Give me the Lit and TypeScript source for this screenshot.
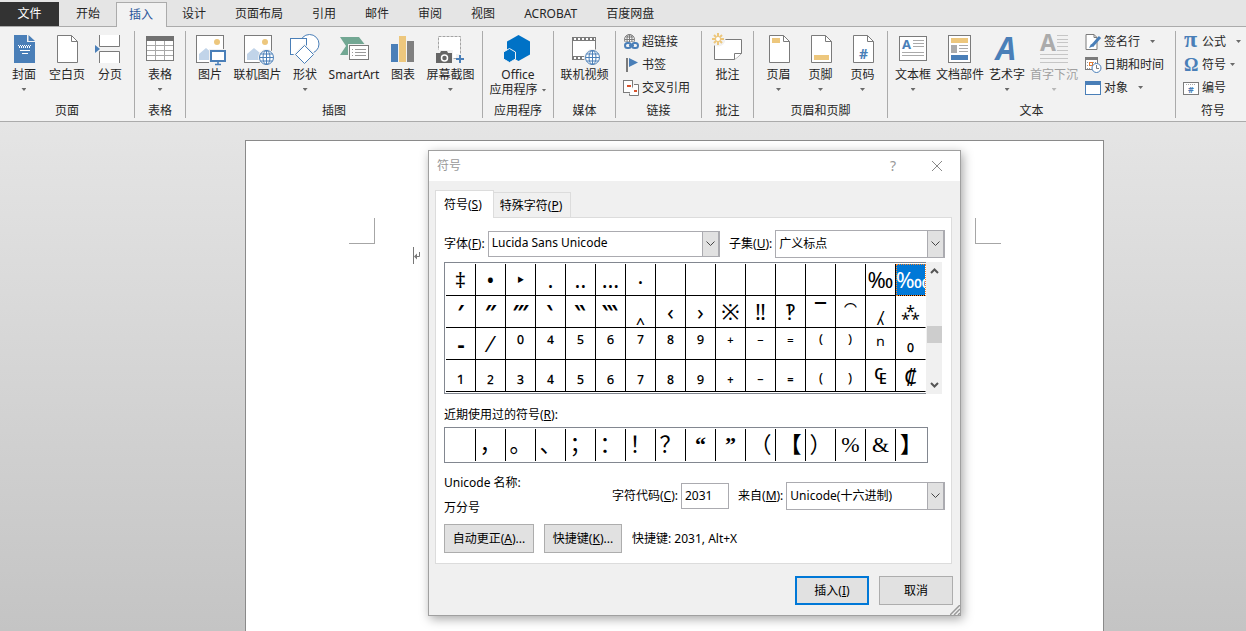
import { LitElement, html, svg, css, nothing, TemplateResult } from "lit";
import { customElement, property, state } from "lit/decorators.js";
import { classMap } from "lit/directives/class-map.js";

const BLUE = "#4a7fb8";
const GRAY = "#7b7b7b";
const GOLD = "#edc77d";

const pageShape = svg`
  <path d="M6.5 1.5h14l6 6v21h-20z" fill="#fff" stroke="${GRAY}"/>
  <path d="M20.5 1.5v6h6" fill="none" stroke="${GRAY}"/>`;

const photo = svg`
  <rect x="2.5" y="1.5" width="27" height="27" fill="#fff" stroke="${GRAY}"/>
  <circle cx="23" cy="8" r="3" fill="${GOLD}"/>
  <path d="M5 26v-6l7-6 6 5v7z" fill="#c1d4e9"/>`;

const globe = (cx: number, cy: number, r: number, color = BLUE) => svg`
  <g fill="none" stroke="${color}">
    <circle cx="${cx}" cy="${cy}" r="${r}" fill="#fff"/>
    <ellipse cx="${cx}" cy="${cy}" rx="${r / 2}" ry="${r}"/>
    <path d="M${cx} ${cy - r}v${2 * r}M${cx - r} ${cy}h${2 * r}M${cx - r + 1} ${cy - r / 2}h${2 * r - 2}M${cx - r + 1} ${cy + r / 2}h${2 * r - 2}"/>
  </g>`;

const ICONS: Record<string, TemplateResult> = {
  cover: svg`
    <path d="M6 1h13v7h8v21h-21z" fill="${BLUE}"/>
    <path d="M20.500 1v6h6.500z" fill="${BLUE}"/>
    <path d="M10 11.500h13M11 13.500h12" stroke="#fff" stroke-dasharray="1 1"/>
    <path d="M10 12.500h13" stroke="#fff" stroke-dasharray="1 1" stroke-dashoffset="1"/>
    <path d="M12 16.500h10M14 19.500h6" stroke="#fff"/>`,
  blank: pageShape,
  pagebreak: svg`
    <path d="M6 1h19v11h-19zM6 18h19v11h-19z" fill="#fff"/>
    <path d="M5.500 1v11.500h20v-11.500M5.500 29v-11.500h20v11.500" fill="none" stroke="${GRAY}"/>
    <path d="M1 11l5 4-5 4z" fill="${BLUE}"/>`,
  table: svg`
    <rect x="2.5" y="2.500" width="27" height="24" fill="#fff" stroke="${GRAY}"/>
    <path d="M3 11.500h26M3 16.500h26M3 21.500h26M11.500 7v19M20.500 7v19" stroke="#a8a8a8"/>
    <path d="M2 2h28v5h-28z" fill="#717171"/>`,
  picture: svg`${photo}
    <rect x="15" y="15" width="17" height="16" fill="#f2f2f2"/>
    <rect x="17" y="17" width="14" height="10" fill="#fff" stroke="${BLUE}" stroke-width="2"/>
    <path d="M24 28v2M21 30.500h6" stroke="${BLUE}" stroke-width="1.500"/>`,
  onlinepic: svg`${photo}<circle cx="24.500" cy="23.500" r="8.500" fill="#f2f2f2"/>${globe(24.5, 23.5, 7)}`,
  shapes: svg`
    <g fill="#fff" stroke="${BLUE}">
      <circle cx="20.500" cy="10" r="9.500"/>
      <rect x="1.500" y="4.500" width="16" height="16"/>
      <path d="M15.500 11.500l9 9-9 9-9-9z" stroke="#f2f2f2" stroke-width="3"/>
      <path d="M15.500 11.500l9 9-9 9-9-9z"/>
    </g>`,
  smartart: svg`
    <path d="M2 3h19l7 9-7 9h-19l6-9z" fill="#72a793"/>
    <rect x="10" y="10" width="22" height="18" fill="#f2f2f2"/>
    <rect x="11.500" y="11.500" width="19" height="14" fill="#fff" stroke="${GRAY}"/>
    <path d="M14 15.500h1M14 18.500h1M14 21.500h1M17 15.500h11M17 18.500h11M17 21.500h11" stroke="#999"/>`,
  chart: svg`
    <path d="M4 10h7v18h-7z" fill="${BLUE}"/>
    <path d="M12 2h7v26h-7z" fill="${GOLD}"/>
    <path d="M20 7h7v21h-7z" fill="#808080"/>`,
  screenshot: svg`
    <rect x="4.500" y="2.500" width="22" height="22" fill="#fff" stroke="#a3a3a3" stroke-dasharray="3 1"/>
    <path d="M1 16h18v14h-18z" fill="#f2f2f2"/>
    <path d="M2 19h4l1-2h6l1 2h4v10h-16z" fill="#666"/>
    <circle cx="10.500" cy="24" r="3" fill="none" stroke="#fff" stroke-width="1.500"/>
    <path d="M22 20h9v9h-9z" fill="#f2f2f2"/>
    <path d="M22 25h8M26 21v8" stroke="${BLUE}" stroke-width="2"/>`,
  office: svg`
    <path d="M16.500 1l11.500 6.500v13l-11.500 6.500-11.500-6.500v-13z" fill="#0072c6"/>
    <path d="M7.500 14.500l6 3.500v7l-6 3.500-6-3.500v-7z" fill="#0072c6" stroke="#f2f2f2"/>`,
  video: svg`
    <rect x="4.500" y="3.500" width="23" height="22" fill="#fff" stroke="${GRAY}"/>
    <path d="M4 5h24M4 24h24" stroke="${GRAY}" stroke-width="4"/>
    <path d="M6 5h21M6 24h21" stroke="#fff" stroke-width="2" stroke-dasharray="2 2"/>
    <circle cx="24.500" cy="23.500" r="8.500" fill="#f2f2f2"/>${globe(24.5, 23.5, 7)}`,
  comment: svg`
    <path d="M2.500 5.500h27v14l-7 6h-20z" fill="#fff" stroke="${GRAY}"/>
    <path d="M22.500 25.500v-6h7" fill="#fff" stroke="${GRAY}"/>
    <circle cx="6" cy="5" r="7.500" fill="#f2f2f2"/>
    <path d="M6-1v12M0 5h12M2 1l8 8M10 1l-8 8" stroke="${GOLD}" stroke-width="2"/>
    <circle cx="6" cy="5" r="2" fill="#fff"/>`,
  header: svg`${pageShape}<path d="M9 4h8v5h-8z" fill="${GOLD}"/>`,
  footer: svg`${pageShape}<path d="M9 21h15v5h-15z" fill="${GOLD}"/>`,
  pageno: svg`${pageShape}<text x="12" y="25" font-size="14" font-weight="bold" fill="${BLUE}">#</text>`,
  textbox: svg`
    <rect x="2.500" y="2.500" width="27" height="24" fill="#fff" stroke="${GRAY}"/>
    <text x="5" y="15" font-size="13" font-weight="bold" fill="${BLUE}">A</text>
    <path d="M16 6.500h11M16 9.500h11M16 12.500h11M5 18.500h22M5 21.500h22" stroke="#aaa"/>`,
  parts: svg`
    <rect x="4.500" y="1.500" width="22" height="27" fill="#fff" stroke="${GRAY}"/>
    <path d="M7 4h17v5h-17z" fill="${GOLD}"/>
    <path d="M7 11h6v8h-6z" fill="#ababab"/>
    <path d="M15 11.500h9M15 14.500h9M15 17.500h9" stroke="#aaa"/>
    <path d="M7 21h17v5h-17z" fill="${BLUE}"/>`,
  wordart: svg`<text x="5" y="26" font-size="32" font-weight="bold" font-style="italic" fill="${BLUE}">A</text>`,
  dropcap: svg`
    <text x="2" y="17" font-size="23" font-weight="bold" fill="#ababab">A</text>
    <path d="M19 1.500h11M19 5.500h11M19 8.500h11M19 12.500h11M19 16.500h11M2 20.500h28M2 24.500h28M2 28.500h28" stroke="#c6c6c6"/>`,
  link: svg`
    ${globe(6.5, 5.5, 5, GRAY)}
    <path d="M0 8h16v8h-16z" fill="#f2f2f2"/>
    <g fill="none" stroke="${BLUE}" stroke-width="2">
      <rect x="2" y="9" width="6" height="5" rx="2.500"/>
      <rect x="9" y="9" width="6" height="5" rx="2.500"/>
      <path d="M6 11.500h5"/>
    </g>`,
  bookmark: svg`
    <path d="M4 1v14" stroke="${GRAY}" stroke-width="2"/>
    <path d="M6 1l9 4.500-9 4.500z" fill="${BLUE}"/>`,
  crossref: svg`
    <rect x=".5" y=".5" width="9" height="12" fill="#fff" stroke="${GRAY}"/>
    <path d="M11 4.500h4.500v11h-9v-2" fill="#fff" stroke="${GRAY}"/>
    <path d="M4 5h4v2h-4zM11 10h3v2h-3z" fill="#d9532c"/>`,
  signature: svg`
    <path d="M1 .5h8l3 3v12h-11z" fill="#fff" stroke="${GRAY}"/>
    <path d="M9 .5v3h3" fill="none" stroke="${GRAY}"/>
    <path d="M15 3l-8 9" stroke="${BLUE}" stroke-width="3"/>
    <path d="M4 14l2-4 3 2z" fill="${BLUE}"/>`,
  datetime: svg`
    <rect x=".5" y=".5" width="12" height="12" fill="#fff" stroke="${GRAY}"/>
    <path d="M0 0h13v3h-13z" fill="${GRAY}"/>
    <path d="M2 5.500h9M2 8.500h9M2 11.500h3" stroke="#999" stroke-dasharray="1 1"/>
    <rect x="4.500" y="5.500" width="3" height="3" fill="#fff" stroke="#e07a30"/>
    <circle cx="11.500" cy="11" r="4.500" fill="#fff" stroke="${BLUE}"/>
    <path d="M11.500 8v3.500h2.500" fill="none" stroke="${GRAY}"/>`,
  object: svg`
    <rect x=".5" y="1.500" width="15" height="13" fill="#fff" stroke="${BLUE}"/>
    <path d="M0 1h16v4h-16z" fill="${BLUE}"/>`,
  pi: svg`<text class="sym" x="1" y="13" font-size="24" font-weight="bold" fill="${BLUE}">π</text>`,
  omega: svg`<text class="sym" x="1" y="14" font-size="18" font-weight="bold" fill="${BLUE}">Ω</text>`,
  number: svg`
    <rect x=".5" y="2.500" width="15" height="12" fill="#fff" stroke="${GRAY}"/>
    <path d="M3 4.500h10" stroke="#aaa" stroke-dasharray="1 1"/>
    <text x="5" y="13" font-size="9" font-weight="bold" fill="${BLUE}">#</text>`,
};

interface Command {
  icon: string;
  label: string;
  second?: string;
  menu?: boolean;
  spaced?: boolean;
  disabled?: boolean;
}

interface Group {
  id: string;
  name: string;
  large?: Command[];
  small?: Command[];
}

const TABS = ["开始", "插入", "设计", "页面布局", "引用", "邮件", "审阅", "视图", "ACROBAT", "百度网盘"];

const GROUPS: Group[] = [
  { id: "pages", name: "页面", large: [
    { icon: "cover", label: "封面", menu: true },
    { icon: "blank", label: "空白页" },
    { icon: "pagebreak", label: "分页" } ] },
  { id: "tables", name: "表格", large: [{ icon: "table", label: "表格", menu: true }] },
  { id: "art", name: "插图", large: [
    { icon: "picture", label: "图片" },
    { icon: "onlinepic", label: "联机图片" },
    { icon: "shapes", label: "形状", menu: true },
    { icon: "smartart", label: "SmartArt" },
    { icon: "chart", label: "图表" },
    { icon: "screenshot", label: "屏幕截图", menu: true } ] },
  { id: "apps", name: "应用程序", large: [{ icon: "office", label: "Office", second: "应用程序", menu: true }] },
  { id: "media", name: "媒体", large: [{ icon: "video", label: "联机视频" }] },
  { id: "links", name: "链接", small: [
    { icon: "link", label: "超链接" },
    { icon: "bookmark", label: "书签" },
    { icon: "crossref", label: "交叉引用" } ] },
  { id: "comments", name: "批注", large: [{ icon: "comment", label: "批注" }] },
  { id: "hf", name: "页眉和页脚", large: [
    { icon: "header", label: "页眉", menu: true },
    { icon: "footer", label: "页脚", menu: true },
    { icon: "pageno", label: "页码", menu: true } ] },
  { id: "text", name: "文本", large: [
    { icon: "textbox", label: "文本框", menu: true },
    { icon: "parts", label: "文档部件", menu: true },
    { icon: "wordart", label: "艺术字", menu: true },
    { icon: "dropcap", label: "首字下沉", menu: true, disabled: true } ], small: [
    { icon: "signature", label: "签名行", menu: true, spaced: true },
    { icon: "datetime", label: "日期和时间" },
    { icon: "object", label: "对象", menu: true, spaced: true } ] },
  { id: "symbols", name: "符号", small: [
    { icon: "pi", label: "公式", menu: true, spaced: true },
    { icon: "omega", label: "符号", menu: true },
    { icon: "number", label: "编号" } ] },
];

@customElement("word-ribbon")
export class WordRibbon extends LitElement {
  static styles = css`
    :host { display: block; color: #262626; }
    button { font: inherit; color: inherit; background: none; border: 0; padding: 0; margin: 0; white-space: nowrap; }
    svg { display: block; overflow: visible; flex: none; font-family: "Noto Sans", sans-serif; }
    .sym { font-family: "Liberation Serif", serif; }
    .tabs { display: flex; height: 27px; padding-top: 2px; box-sizing: border-box; background: #e5e5e5; border-bottom: 1px solid #ababab; }
    .tab { padding: 0 14px 0 15px; height: 24px; }
    .file { width: 59px; background: #333; color: #fff; margin-right: 2px; padding: 0; }
    .active { height: 25px; margin-left: 2px; padding: 0 13px 1px 12px; border: 1px solid #ababab; border-bottom: 0; background: #f2f2f2; color: #2b579a; }
    .body { display: flex; height: 87px; padding: 4px 0 3px; background: #f2f2f2; border-bottom: 1px solid #ababab; overflow: hidden; }
    .group { display: flex; flex-direction: column; flex: none; box-sizing: border-box; border-right: 1px solid #ababab; padding-top: 3px; }
    .row { display: flex; flex: 1; justify-content: center; align-items: flex-start; gap: 8px; }
    .name { line-height: 16px; height: 15px; text-align: center; }
    .pages { width: 135px; }
    .tables { width: 51px; }
    .art { width: 297px; }
    .apps { width: 71px; }
    .media { width: 62px; }
    .links { width: 86px; }
    .comments { width: 52px; }
    .hf { width: 134px; }
    .text { width: 288px; }
    .symbols { width: 74px; border-right: 0; }
    .art .row { gap: 7px; }
    .text .row { gap: 5px; padding-left: 7px; justify-content: flex-start; }
    .text .stack { margin-left: 2px; }
    .links .row, .symbols .row { justify-content: flex-start; padding-left: 7px; }
    .large { display: flex; flex-direction: column; align-items: center; min-width: 34px; line-height: 18px; }
    .art .large { min-width: 33px; }
    .second { display: flex; align-items: center; gap: 4px; line-height: 12px; }
    .arrow { width: 5px; height: 3px; background: #6a6a6a; clip-path: polygon(0 0, 100% 0, 50% 100%); }
    .large > .arrow { margin-top: 4px; }
    .disabled { color: #a0a0a0; }
    .disabled .arrow { background: #b8b8b8; }
    .stack { display: flex; flex-direction: column; margin-top: -4px; }
    .small { display: flex; align-items: center; height: 23px; gap: 3px; }
    .small .arrow { margin-left: 1px; }
    .small .spaced { margin-left: 7px; }
  `;

  private large(c: Command) {
    return html`<button class=${classMap({ large: true, disabled: !!c.disabled })} ?disabled=${c.disabled}>
      <svg width="32" height="32" viewBox="0 0 32 32" aria-hidden="true">${ICONS[c.icon]}</svg>
      <span>${c.label}</span>
      ${c.second
        ? html`<span class="second">${c.second}<i class="arrow"></i></span>`
        : c.menu ? html`<i class="arrow"></i>` : nothing}
    </button>`;
  }

  private small(c: Command) {
    return html`<button class="small">
      <svg width="16" height="16" viewBox="0 0 16 16" aria-hidden="true">${ICONS[c.icon]}</svg>
      <span>${c.label}</span>
      ${c.menu ? html`<i class=${classMap({ arrow: true, spaced: !!c.spaced })}></i>` : nothing}
    </button>`;
  }

  render() {
    return html`
      <nav class="tabs">
        <button class="tab file">文件</button>
        ${TABS.map((t) => html`<button class=${classMap({ tab: true, active: t === "插入" })}>${t}</button>`)}
      </nav>
      <div class="body">
        ${GROUPS.map((g) => html`<section class="group ${g.id}">
          <div class="row">
            ${g.large?.map((c) => this.large(c))}
            ${g.small ? html`<div class="stack">${g.small.map((c) => this.small(c))}</div>` : nothing}
          </div>
          <div class="name">${g.name}</div>
        </section>`)}
      </div>`;
  }
}

@customElement("combo-box")
export class ComboBox extends LitElement {
  @property() label = "";
  @property() key = "";
  @property({ type: Array }) options: string[] = [];

  static styles = css`
    :host { display: flex; align-items: center; gap: 3px; }
    label { white-space: nowrap; }
    .box { position: relative; flex: 1; display: flex; min-width: 0; }
    select { appearance: none; width: 100%; height: 28px; box-sizing: border-box; border: 1px solid #ababb0; border-radius: 0; background: #fff; color: #000; font: inherit; padding: 0 20px 0 3px; margin: 0; }
    :host(.short) select { height: 26px; padding-bottom: 2px; }
    .drop { position: absolute; right: 0; top: 0; bottom: 0; width: 18px; box-sizing: border-box; border: 1px solid #ababb0; border-right-width: 2px; background: #e1e1e1; display: grid; place-items: center; pointer-events: none; }
  `;

  render() {
    return html`
      <label for="field">${this.label}(<u>${this.key}</u>):</label>
      <div class="box">
        <select id="field">${this.options.map((o) => html`<option>${o}</option>`)}</select>
        <span class="drop"><svg width="9" height="6" viewBox="0 0 9 6"><path d="M.5 .5l4 4 4-4" fill="none" stroke="#444"/></svg></span>
      </div>`;
  }
}

const SYMBOLS = [
  ..."‡•‣․‥…‧", "", "", "", "", "", "", "", ..."‰‱",
  ..."′″‴‵‶‷‸‹›※‼‽‾⁀⁁⁂",
  ..."⁃⁄⁰⁴⁵⁶⁷⁸⁹⁺⁻⁼⁽⁾ⁿ₀",
  ..."₁₂₃₄₅₆₇₈₉₊₋₌₍₎₠₡",
];

const RECENT = ["", ..."，。、；：！？“”（【）%&】"];

const oneOf = (set: string, s: string) => s !== "" && set.includes(s);

@customElement("symbol-dialog")
export class SymbolDialog extends LitElement {
  @state() private selected = 15;

  static styles = css`
    :host { display: block; box-sizing: border-box; border: 1px solid #a0a0a0; background: #f0f0f0; box-shadow: 2px 3px 10px rgba(0, 0, 0, 0.35); color: #000; }
    button { font: inherit; color: inherit; padding: 0; margin: 0; white-space: nowrap; }
    .title { display: flex; align-items: center; height: 30px; background: #fff; color: #999; padding: 0 17px 0 8px; gap: 35px; }
    .title span { flex: 1; }
    .title button { border: 0; background: none; font-size: 14px; }
    .title svg { display: block; }
    .content { padding: 9px 8px 10px 6px; }
    .tabs { display: flex; align-items: flex-end; }
    .tab { border: 1px solid #dcdcdc; border-bottom: 0; background: #f0f0f0; height: 25px; padding: 1px 8px 0 6px; border-left: 0; }
    .tab.on { border-left: 1px solid #dcdcdc; background: #fff; height: 28px; padding: 0 11px 0 8px; margin-bottom: -1px; position: relative; }
    .panel { border: 1px solid #dcdcdc; background: #fff; padding: 12px 6px 10px 8px; }
    .line { display: flex; align-items: center; gap: 9px; }
    .font { width: 276px; }
    .grow { flex: 1; }
    .picker { display: flex; margin-top: 4px; height: 132px; }
    .grid { display: grid; grid-template-columns: repeat(16, 30px); grid-auto-rows: 32px; box-sizing: border-box; border: 1px solid #828790; border-right: 0; padding: 1px 0 0 1px; }
    .cell { border: 0; border-right: 1px solid #000; border-bottom: 1px solid #000; background: #fff; font: 22px/31px "Noto Sans", "DejaVu Sans", "Noto Sans CJK SC", sans-serif; overflow: hidden; display: flex; justify-content: center; align-items: flex-start; }
    .cell:nth-child(16n) { border-right-color: #fff; }
    .cell.sup { padding-top: 3px; font-size: 20px; line-height: 28px; }
    .cell.sub { font-size: 20px; line-height: 28px; }
    .cell.prime { font-weight: bold; }
    .cell.star { font-size: 16px; }
    .cell.sel { background: #0078d7; color: #fff; outline: 1px dotted #ff8728; outline-offset: -1px; justify-content: flex-start; }
    .scroll { width: 16px; background: #f0f0f0; display: flex; flex-direction: column; align-items: center; padding: 6px 0 5px; box-sizing: border-box; }
    .thumb { width: 15px; height: 17px; background: #cdcdcd; margin: 51px 0 auto; }
    .caption { line-height: 16px; margin: 13px 0 4px; }
    .recent { display: grid; grid-template-columns: repeat(16, 30px); height: 36px; box-sizing: border-box; border: 1px solid #828790; padding: 1px; width: 484px; }
    .recent button { border: 0; border-right: 1px solid #000; background: #fff; font: 22px/32px "Liberation Serif", "Noto Sans CJK SC", serif; display: flex; justify-content: center; overflow: hidden; }
    .recent button:last-child { border-right: 0; }
    .recent .bold { font-weight: bold; }
    .info { display: flex; justify-content: space-between; align-items: center; margin-top: 7px; }
    .info .line { padding-top: 2px; }
    .names { line-height: 25px; }
    .code { display: flex; align-items: center; gap: 3px; }
    .code input { width: 48px; height: 26px; box-sizing: border-box; border: 1px solid #ababb0; font: inherit; padding: 0 3px 2px; margin: 0; }
    .from { width: 207px; }
    .push { height: 29px; background: #e1e1e1; border: 1px solid #adadad; }
    .actions { display: flex; align-items: center; gap: 10px; margin-top: 4px; }
    .auto { width: 90px; }
    .keys { width: 78px; }
    .footer { display: flex; justify-content: flex-end; gap: 10px; margin: 12px -1px 0 0; }
    .footer .push { width: 74px; }
    .footer .primary { border: 2px solid #0078d7; }
    .grip { position: absolute; right: 0; bottom: 0; display: block; }
  `;

  private cell(s: string, i: number) {
    const classes = {
      cell: true,
      sel: i === this.selected,
      sup: oneOf("⁰⁴⁵⁶⁷⁸⁹⁺⁻⁼⁽⁾", s),
      sub: oneOf("₀₁₂₃₄₅₆₇₈₉₊₋₌₍₎", s),
      prime: oneOf("′″‴‵‶‷‾⁃", s),
      star: s === "⁂",
    };
    return html`<button class=${classMap(classes)} @click=${() => (this.selected = i)}>${s}</button>`;
  }

  render() {
    return html`
      <header class="title">
        <span>符号</span>
        <button aria-label="帮助">?</button>
        <button aria-label="关闭"><svg width="12" height="12" viewBox="0 0 12 12"><path d="M1 1l10 10M11 1l-10 10" stroke="#888"/></svg></button>
      </header>
      <div class="content">
        <div class="tabs" role="tablist">
          <button class="tab on" role="tab">符号(<u>S</u>)</button>
          <button class="tab" role="tab">特殊字符(<u>P</u>)</button>
        </div>
        <div class="panel">
          <div class="line">
            <combo-box class="font short" label="字体" key="F" .options=${["Lucida Sans Unicode"]}></combo-box>
            <combo-box class="grow" label="子集" key="U" .options=${["广义标点"]}></combo-box>
          </div>
          <div class="picker">
            <div class="grid">${SYMBOLS.map((s, i) => this.cell(s, i))}</div>
            <div class="scroll">
              <svg width="9" height="7" viewBox="0 0 9 7"><path d="M1 5l3.500-3.500 3.500 3.500" fill="none" stroke="#555" stroke-width="2"/></svg>
              <div class="thumb"></div>
              <svg width="9" height="7" viewBox="0 0 9 7"><path d="M1 1l3.500 3.500 3.500-3.500" fill="none" stroke="#555" stroke-width="2"/></svg>
            </div>
          </div>
          <div class="caption">近期使用过的符号(<u>R</u>):</div>
          <div class="recent">${RECENT.map((s) => html`<button class=${classMap({ bold: oneOf("“”【】", s) })}>${s}</button>`)}</div>
          <div class="info">
            <div class="names"><div>Unicode 名称:</div><div>万分号</div></div>
            <div class="line">
              <div class="code"><label for="code">字符代码(<u>C</u>):</label><input id="code" value="2031" /></div>
              <combo-box class="from" label="来自" key="M" .options=${["Unicode(十六进制)"]}></combo-box>
            </div>
          </div>
          <div class="actions">
            <button class="push auto">自动更正(<u>A</u>)...</button>
            <button class="push keys">快捷键(<u>K</u>)...</button>
            <span>快捷键: 2031, Alt+X</span>
          </div>
        </div>
        <div class="footer">
          <button class="push primary">插入(<u>I</u>)</button>
          <button class="push">取消</button>
        </div>
      </div>
      <svg class="grip" width="10" height="10" viewBox="0 0 10 10"><path d="M0 10l10-10M4 10l6-6M8 10l2-2" stroke="#999" stroke-width="1.500"/></svg>`;
  }
}

@customElement("app-root")
export class AppRoot extends LitElement {
  static styles = css`
    :host { display: flex; flex-direction: column; height: 100vh; overflow: hidden; position: relative; font: 12px/18px "Noto Sans", "Noto Sans CJK SC", sans-serif; }
    .desk { flex: 1; display: flex; padding: 18px 142px 0 245px; background: linear-gradient(#e5e5e5, #c4c4c4); }
    .page { flex: 1; background: #fff; border: 1px solid #8a8a8a; border-bottom: 0; padding: 77px 102px 0; }
    .corners { display: flex; justify-content: space-between; }
    .corner { width: 26px; height: 26px; box-sizing: border-box; border: solid #a6a6a6; border-width: 0 1px 1px 0; margin-left: 1px; }
    .corner.right { border-width: 0 0 1px 1px; margin: 0; }
    .caret { display: flex; align-items: center; width: 10px; height: 17px; margin: 3px 0 0 65px; border-left: 1px solid #777; }
    .dialog { position: absolute; left: 428px; top: 150px; width: 533px; }
  `;

  render() {
    return html`
      <word-ribbon></word-ribbon>
      <main class="desk">
        <div class="page">
          <div class="corners"><i class="corner"></i><i class="corner right"></i></div>
          <div class="caret"><svg width="7" height="8" viewBox="0 0 7 8"><path d="M5.500 0v4.500h-4" fill="none" stroke="#777"/><path d="M0 4.500l3-3v6z" fill="#777"/></svg></div>
        </div>
      </main>
      <symbol-dialog class="dialog" role="dialog" aria-label="符号"></symbol-dialog>`;
  }
}
